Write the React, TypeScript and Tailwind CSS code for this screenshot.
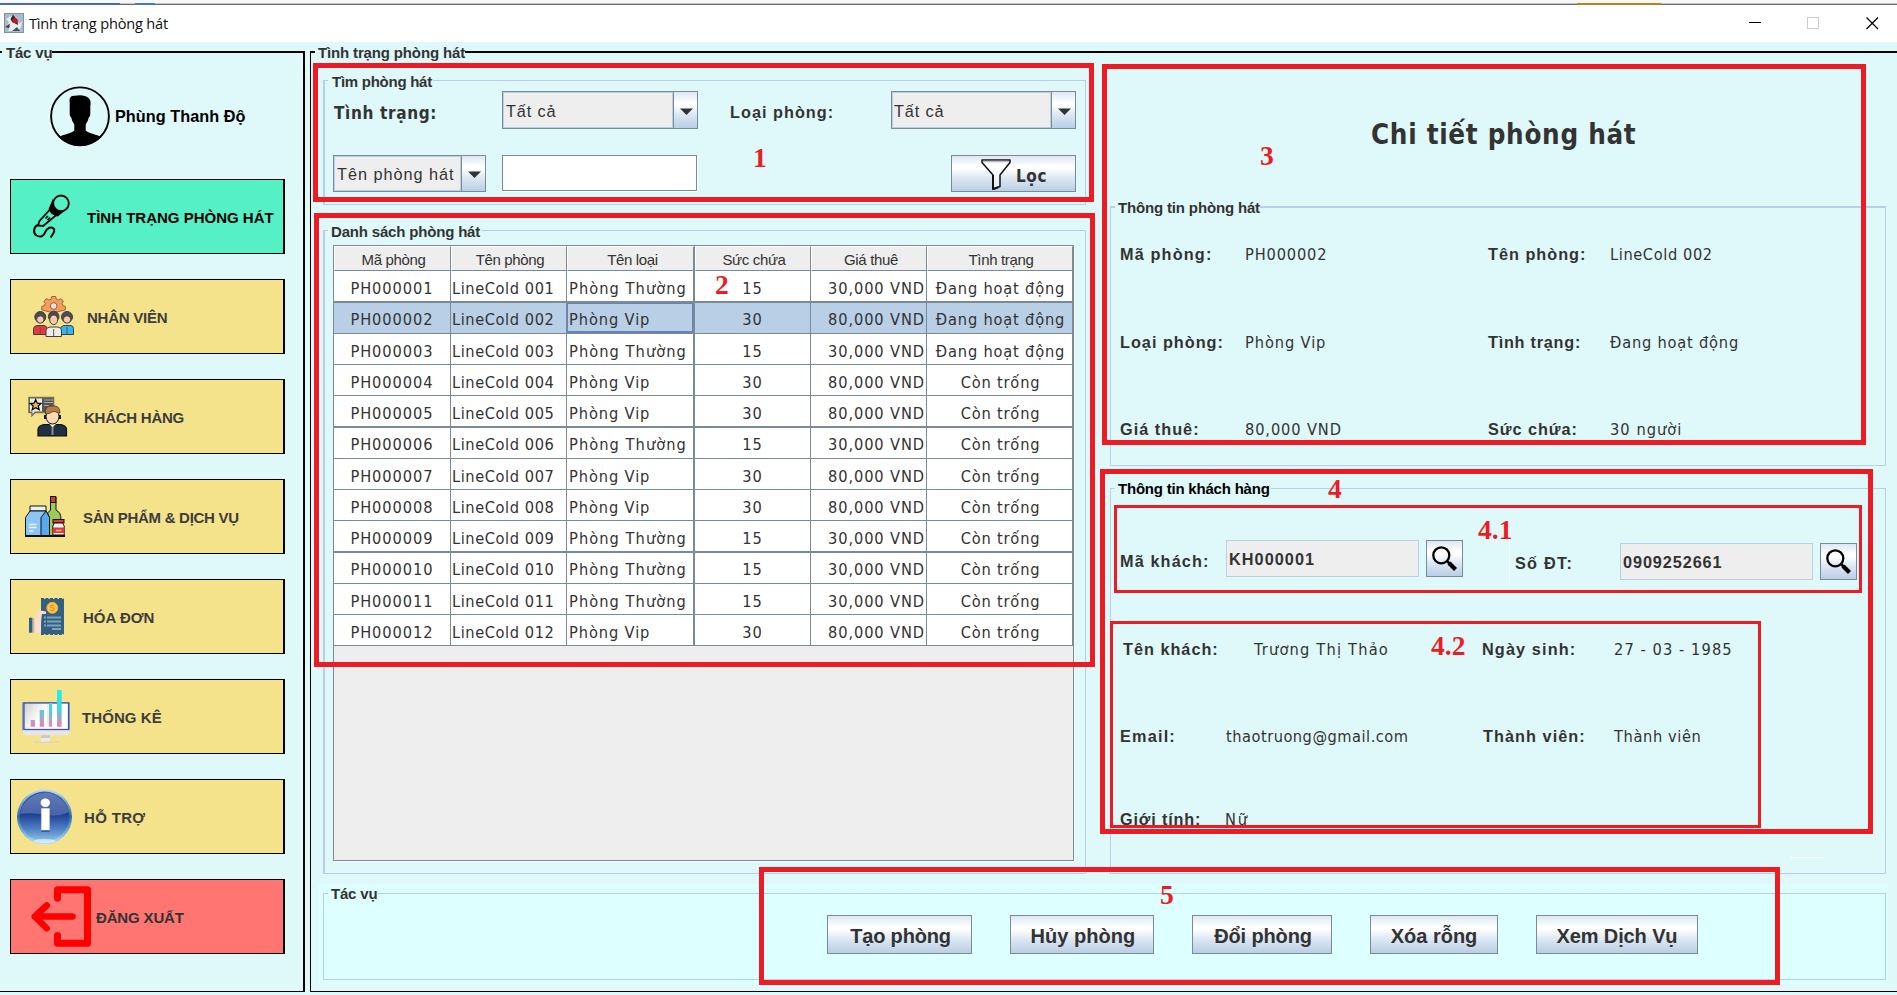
import React from "react";

/* ---------- shared pieces ---------- */

const LABEL = "font-['Liberation_Sans',sans-serif] font-bold text-[16.25px] leading-5 whitespace-nowrap text-[#333]";
const VALUE = "font-['DejaVu_Sans_Condensed','DejaVu_Sans',sans-serif] text-[16.25px] leading-5 whitespace-nowrap text-[#333]";
const DETAIL = VALUE + " pt-px";
const TITLE = "relative h-5 w-fit font-['Liberation_Sans',sans-serif] font-bold text-[15px] leading-5 whitespace-nowrap";
const METAL = "bg-[linear-gradient(to_bottom,#dde8f3_0%,#ffffff_30%,#ffffff_36%,#dde8f3_62%,#b8cfe5_100%)] border border-[#7a8a99]";

function Combo({ text, className, textClass }: { text: string; className: string; textClass: string }) {
  return (
    <div className={"flex border border-[#7a8a99] bg-[#eee] " + className}>
      <div className={"flex flex-1 items-center border border-[#b8cfe5] font-['Liberation_Sans',sans-serif] text-[16.25px] leading-5 whitespace-nowrap text-[#333] " + textClass}>
        {text}
      </div>
      <div className="flex w-[24px] items-center justify-center border-l border-[#7a8a99] bg-[linear-gradient(to_bottom,#dde8f3_0%,#ffffff_30%,#ffffff_36%,#dde8f3_62%,#b8cfe5_100%)]">
        <svg width="13" height="7" className="mt-[2px] ml-px">
          <path d="M0 0.5H13L6.5 7Z" fill="#333" />
        </svg>
      </div>
    </div>
  );
}

function SearchButton({ className }: { className: string }) {
  return (
    <button className={"h-[37px] w-[37px] " + METAL + " " + className}>
      <svg width="35" height="35" viewBox="0 0 35 35" fill="none" stroke="#000">
        <circle cx="14.3" cy="14.3" r="8" strokeWidth="2.3" />
        <path d="M20 20L23 23" strokeWidth="2.5" />
        <path d="M22 22L28.5 28.5" strokeWidth="4.2" />
      </svg>
    </button>
  );
}

/* ---------- sidebar icons ---------- */

const MicIcon = (
  <g fill="none" stroke="#000" strokeWidth="1.8">
    <path d="M40 28.5L28.5 41L27 45.5L32 46L45.5 35Z" />
    <path d="M41.5 22L38.5 29C40 33 42.500 35 46.5 35.500L51.500 31.500C46 31 42.500 28 41.500 22Z" fill="#000" />
    <circle cx="50" cy="23.300" r="7.800" fill="#55f0c5" />
    <path d="M34.500 38.500L37 36M36.500 40L39 37.500" strokeWidth="1.500" />
    <path d="M27.500 44.500C22 47 22 53 25.500 55.500C30 58 33 55.500 34 52.500C36 47.500 40.500 46 43 49C44.500 52 41 55 39.500 57.500" strokeWidth="2" />
  </g>
);

const StaffIcon = (
  <g>
    <g fill="#f99b5b" stroke="#8d6a48" strokeWidth="1">
      <path d="M40.700 16.500h4l.6 2.600 2.200.9 2.300-1.500 2.600 2.700-1.400 2.200.9 2.300 2.400.6v3.600l-12 3-11.500-3v-3.600l2.600-.6.8-2.300-1.300-2.200 2.600-2.700 2.300 1.500 2.300-.9z" />
      <circle cx="42.700" cy="26" r="3.300" fill="#dfe4ea" />
    </g>
    <g stroke="#3f3f46" strokeWidth="1">
      <path d="M22.500 54.500V48.500Q23 46 26 45.500H33Q36 46 36 48.500V54.500Z" fill="#e8383d" />
      <path d="M49.500 54.500V48.500Q50 46 53 45.500H60Q62.500 46 62.500 48.500V54.500Z" fill="#35b5ee" />
      <circle cx="29.300" cy="37" r="5.500" fill="#4a4a52" />
      <circle cx="56" cy="37" r="5.500" fill="#4a4a52" />
      <circle cx="29.300" cy="39.500" r="3.700" fill="#fbc9a8" />
      <circle cx="56" cy="39.500" r="3.700" fill="#fbc9a8" />
      <path d="M35 56.500V50Q35.500 47.500 39 47H46.500Q50.500 47.500 50.500 50V56.500Z" fill="#ececec" />
      <circle cx="42.700" cy="36.500" r="5.300" fill="#4a4a52" />
      <ellipse cx="42.700" cy="39.800" rx="4" ry="4.800" fill="#fbc9a8" />
    </g>
    <path d="M29.300 47v7M56 47v7M42.700 49v7" stroke="#555" strokeWidth="1" />
  </g>
);

const CustomerIcon = (
  <g>
    <path d="M18 17.500H42.500V32.500H24L21 35.500V32.500H18Z" fill="#55564f" stroke="#77714f" strokeWidth="1.500" />
    <path d="M19 18.500H31V31.500H24L21.500 34V31.500H19Z" fill="#ebebeb" />
    <path d="M33 20H42M33 22.500H42M33 25.500H38" stroke="#aaa" strokeWidth="1" />
    <path d="M24.700 19.500L26.300 23.200L30 23.500L27.200 26L28.200 29.800L24.700 27.700L21.200 29.800L22.200 26L19.400 23.500L23.100 23.200Z" fill="#e9bd4b" stroke="#000" strokeWidth="1.200" />
    <path d="M27 56V49Q27.500 45.500 33 44.500H50Q55 45.500 55.500 49V56Z" fill="#213041" stroke="#0d0d0d" strokeWidth="1.200" />
    <path d="M38.500 44L41.500 47.500L45 44Z" fill="#eee" />
    <path d="M41.500 47V55" stroke="#8a8f96" strokeWidth="2" />
    <ellipse cx="41.500" cy="36.500" rx="6.500" ry="7.500" fill="#fbd9b5" stroke="#111" strokeWidth="1" />
    <path d="M34.500 34Q33.500 26 40 26Q49 24.500 49 33L47.500 33Q44 31 42 31.500Q38 34 34.500 34Z" fill="#b27c48" stroke="#4a3a22" strokeWidth=".8" />
    <path d="M34 35v4M49 35v4" fill="none" stroke="#000" strokeWidth="1.800" />
  </g>
);

const ProductIcon = (
  <g stroke="#111" strokeWidth="1">
    <path d="M39.500 17H45V30Q49.800 32.500 49.800 36.500V56.500H36V36Q36.500 32 39.500 30Z" fill="#9ccb5c" />
    <rect x="39.500" y="16.500" width="5.300" height="6" fill="#c04a16" />
    <path d="M19 26H35V31H19Z" fill="#eef1f4" />
    <path d="M19 31H35L38.500 37.500V56.500H14.500V37.500Z" fill="#8cc6f7" />
    <path d="M35 31L38.500 37.500V56.500H30V37.500Z" fill="#5aa9ee" />
    <path d="M18 44.500H25.500M18 47.500H25.500M18 51H22.500" stroke="#e6f3ff" strokeWidth="1.500" />
    <path d="M14 56H54" strokeWidth="1.800" />
    <rect x="42" y="39.500" width="11" height="3.500" fill="#e23b33" />
    <path d="M43.500 43H51.500L53.200 46V55H41.800V46Z" fill="#f3f3f3" />
    <rect x="41.800" y="47.500" width="11.500" height="5.500" fill="#e23b33" stroke="none" />
    <path d="M45 50.500H50.500" stroke="#ffb3ae" strokeWidth="1.500" />
  </g>
);

const InvoiceIcon = (
  <g>
    <rect x="30" y="19" width="23" height="35" fill="#335f80" />
    <path d="M30 18.700H53M30 54.300H53" stroke="#335f80" strokeWidth="1.200" strokeDasharray="3 1.500" />
    <circle cx="41.300" cy="27.800" r="5.500" fill="#f8c944" stroke="#f2a93a" strokeWidth="1" />
    <path d="M43.500 25.500Q39 24.500 39.500 27Q43.500 28 43.300 29.500Q42.500 31.500 39 30.300" fill="none" stroke="#e8912d" strokeWidth="1.200" />
    <path d="M33 37.500H50M33 41.500H50M33 45.500H50M41 49H50" stroke="#7fa3bb" strokeWidth="1.800" />
    <path d="M35.500 36V47" stroke="#335f80" strokeWidth="1" />
    <path d="M23 39L26.500 31.500Q30 30 35 31.500V34H31Q30 37 30 53.500L23 52Z" fill="#fddccb" />
    <path d="M21.300 38H23.300V52.500H21.300Z" fill="#c5b497" />
    <path d="M18 37.700H21.300V52.700H18Z" fill="#335f80" />
  </g>
);

const StatsIcon = (
  <g>
    <defs>
      <linearGradient id="bars" gradientUnits="userSpaceOnUse" x1="0" y1="10" x2="0" y2="47">
        <stop offset="0" stopColor="#17f0f5" />
        <stop offset=".55" stopColor="#4fd0e0" />
        <stop offset="1" stopColor="#f57fb0" />
      </linearGradient>
      <linearGradient id="screen" x1="0" y1="0" x2="1" y2="0.400">
        <stop offset="0" stopColor="#cfcfcf" />
        <stop offset=".5" stopColor="#ffffff" />
      </linearGradient>
    </defs>
    <rect x="11" y="22" width="48" height="28.500" rx="1" fill="#8c9cc4" />
    <path d="M12 49.500H58.500V53Q58.500 55.200 56 55.200H15Q12 55.200 12 53Z" fill="#e6e6e6" />
    <rect x="13" y="23" width="44.500" height="26.500" fill="url(#screen)" stroke="#3c59a8" strokeWidth="1.300" />
    <rect x="30" y="55.200" width="9" height="3" fill="#c9c9c4" />
    <rect x="30" y="58" width="9" height="4" fill="#ecebe6" />
    <path d="M22.500 62.300H48" stroke="#dcd6b8" strokeWidth="1.500" />
    <path d="M29 30H32V46.700H29ZM36 24H40V46.700H36Z" fill="#eee" />
    <path d="M19.700 40H24V46.700H19.700ZM28.700 30H33V46.700H28.700ZM38 23H41V46.700H38ZM46 10H50.700V46.700H46Z" fill="url(#bars)" />
  </g>
);

const HelpIcon = (
  <g>
    <defs>
      <linearGradient id="orb" x1="0" y1="0" x2="0" y2="1">
        <stop offset="0" stopColor="#3a5ba8" />
        <stop offset=".45" stopColor="#1d3f92" />
        <stop offset=".75" stopColor="#4f82c4" />
        <stop offset="1" stopColor="#8fc4e8" />
      </linearGradient>
      <linearGradient id="rim" x1="0" y1="0" x2="0" y2="1">
        <stop offset="0" stopColor="#b9dcf0" />
        <stop offset=".5" stopColor="#2b6cb0" />
        <stop offset="1" stopColor="#b8e2f5" />
      </linearGradient>
    </defs>
    <circle cx="33.500" cy="36.800" r="27.500" fill="url(#rim)" />
    <circle cx="33.500" cy="36.500" r="25" fill="url(#orb)" />
    <path d="M9 34A25 25 0 0 1 58 32Q48 37 36 35Q20 32 9 34Z" fill="#fff" opacity=".2" />
    <ellipse cx="33.500" cy="61" rx="11" ry="2" fill="#d8effa" opacity=".8" />
    <ellipse cx="34.300" cy="22.700" rx="4.700" ry="4.200" fill="#fff" />
    <rect x="30.300" y="28.300" width="8.300" height="22" fill="#fff" />
    <path d="M30.300 51.200H38.600" stroke="#2f5ca8" strokeWidth="1.500" />
  </g>
);

const LogoutIcon = (
  <g fill="none" stroke="#f00" strokeWidth="7" strokeLinejoin="round" strokeLinecap="round">
    <path d="M46.500 18.300V9.800H76.500V63.300H46.500V55.500" />
    <path d="M23.800 36.500H61.500M35.700 25.500L23.800 36.500L35.700 48.300" strokeWidth="6.500" />
  </g>
);

const NAV = [
  { text: "TÌNH TRẠNG PHÒNG HÁT", icon: MicIcon, bg: "bg-[#55f0c5]", label: "ml-[6px] text-black tracking-[0px]" },
  { text: "NHÂN VIÊN", icon: StaffIcon, bg: "bg-[#f5e38c]", label: "ml-[6px] text-[#3d3d3d] tracking-[-0.25px]" },
  { text: "KHÁCH HÀNG", icon: CustomerIcon, bg: "bg-[#f5e38c]", label: "ml-[3px] text-[#3d3d3d] tracking-[-0.25px]" },
  { text: "SẢN PHẨM & DỊCH VỤ", icon: ProductIcon, bg: "bg-[#f5e38c]", label: "ml-[2px] text-[#3d3d3d] tracking-[-0.28px]" },
  { text: "HÓA ĐƠN", icon: InvoiceIcon, bg: "bg-[#f5e38c]", label: "ml-[2px] text-[#3d3d3d] tracking-[0px]" },
  { text: "THỐNG KÊ", icon: StatsIcon, bg: "bg-[#f5e38c]", label: "ml-[1px] text-[#3d3d3d] tracking-[0.08px]" },
  { text: "HỖ TRỢ", icon: HelpIcon, bg: "bg-[#f5e38c]", label: "ml-[3px] text-[#3d3d3d] tracking-[0.33px]" },
  { text: "ĐĂNG XUẤT", icon: LogoutIcon, bg: "bg-[#ff7572]", label: "ml-[15px] text-[#333] tracking-[-0.15px]" },
];

function Sidebar() {
  return (
    <aside className="mt-[9px] h-[941px] w-[305px] shrink-0 border-t-2 border-r-2 border-b border-black">
      <div className={TITLE + " mt-[-10px] ml-[2px] bg-[#dff8fa] pl-[4px] text-[#333] tracking-[-0.19px]"}>Tác vụ</div>
      <div className="mt-[23px] ml-[50px] flex h-[61px] items-center">
        <svg width="60" height="61" viewBox="0 0 60 61">
          <defs>
            <clipPath id="disc"><circle cx="30" cy="30.300" r="29.500" /></clipPath>
          </defs>
          <g clipPath="url(#disc)">
            <path d="M19.700 17Q18.500 9.500 24.500 9.800Q34 8 38.500 12Q41.500 14 40.300 20V27.500Q40.500 30 38.800 31.500Q38 35.500 35.700 38.500V44.500Q37 46.500 48 49.500Q52 51 54 56V62H6V56Q8 51 12 49.500Q23 46.500 24.300 44.500V38.500Q22 35.500 21.200 31.500Q19.500 30 19.700 27.500Z" />
          </g>
          <circle cx="30" cy="30.300" r="28.900" fill="none" stroke="#000" strokeWidth="1.900" />
        </svg>
        <span className={LABEL + " ml-[5px] pb-px !text-black tracking-[0.03px]"}>Phùng Thanh Độ</span>
      </div>
      <nav className="mt-[32px] ml-[10px] flex w-[275px] flex-col gap-[25px]">
        {NAV.map((n) => (
          <button key={n.text} className={"flex h-[75px] items-center border border-r-2 border-black text-left " + n.bg}>
            <svg width="70" height="73" viewBox="0 0 70 73" className="shrink-0 overflow-visible">{n.icon}</svg>
            <span className={"pt-[2px] font-['Liberation_Sans',sans-serif] text-[15px] leading-5 font-bold whitespace-nowrap " + n.label}>{n.text}</span>
          </button>
        ))}
      </nav>
    </aside>
  );
}

/* ---------- room search and list ---------- */

function SearchGroup() {
  return (
    <div className="h-[125px] border border-l-2 border-[#b8cfe5]">
      <div className={TITLE + " mt-[-9px] mb-[-1px] ml-[3px] bg-[#dff8fa] pr-px pl-[4px] text-[#333] tracking-[-0.26px]"}>Tìm phòng hát</div>
      <div className="flex h-[38px] items-start">
        <div className="mt-[12px] ml-[9px] w-[168px] font-['DejaVu_Sans_Condensed','DejaVu_Sans',sans-serif] text-[17px] leading-5 font-bold tracking-[0.65px] whitespace-nowrap text-[#333]">Tình trạng:</div>
        <Combo text="Tất cả" className="h-[38px] w-[196px]" textClass="pl-[2px] pt-[2px] tracking-[0.88px]" />
        <div className={LABEL + " mt-[11px] ml-[32px] w-[161px] tracking-[1.02px]"}>Loại phòng:</div>
        <Combo text="Tất cả" className="h-[38px] w-[185px]" textClass="pl-[1px] pt-[2px] tracking-[0.88px]" />
      </div>
      <div className="mt-[26px] ml-[8px] flex h-[37px]">
        <Combo text="Tên phòng hát" className="w-[153px]" textClass="pl-[2px] pt-px tracking-[0.98px]" />
        <div className="ml-[16px] h-[36px] w-[195px] border border-[#7a8a99] bg-white shadow-[1px_1px_0_#fff]" />
        <button className={"ml-[254px] flex w-[125px] items-start pl-[29px] " + METAL}>
          <svg width="30" height="31" viewBox="0 0 30 31" className="mt-[3px]" fill="none" stroke="#111" strokeWidth="1.500" strokeLinejoin="round">
            <path d="M1 1H29V3.500L19 16V27.500L12 30V16L1 3.500Z" fill="#fff" fillOpacity=".5" />
            <path d="M2 2.500H28" stroke="#b9b9c4" strokeWidth="1.500" />
            <path d="M12 16V30L17 28.500" strokeWidth="2" />
          </svg>
          <span className="mt-[10px] ml-[5px] font-['DejaVu_Sans_Condensed','DejaVu_Sans',sans-serif] text-[17px] leading-5 font-bold tracking-[0.6px] text-[#333]">Lọc</span>
        </button>
      </div>
    </div>
  );
}

const COLS = "grid grid-cols-[117px_116px_128px_116px_116px_146px]";
const HEADS = ["Mã phòng", "Tên phòng", "Tên loại", "Sức chứa", "Giá thuê", "Tình trạng"];
const ROOMS: [string, boolean, boolean][] = [
  ["001", false, true],
  ["002", true, true],
  ["003", false, true],
  ["004", true, false],
  ["005", true, false],
  ["006", false, false],
  ["007", true, false],
  ["008", true, false],
  ["009", false, false],
  ["010", false, false],
  ["011", false, false],
  ["012", true, false],
];

function RoomTable() {
  return (
    <div className="mt-[3px] ml-[8px] h-[616px] w-[741px] border border-[#7a8a99] bg-[#eee] shadow-[1px_1px_0_#fff]">
      <div className={COLS + " h-[25px]"}>
        {HEADS.map((h, i) => (
          <div
            key={h}
            className={
              "flex justify-center border-t border-b border-l border-t-white border-b-[#7a8a99] border-l-white border-r-[#7a8a99] bg-[#eee] pt-[3px] font-['Liberation_Sans',sans-serif] text-[15px] leading-5 tracking-[-0.34px] whitespace-nowrap text-[#333] " +
              (i === 2 ? "border-r-2 pl-[4px]" : i === 4 ? "border-r pl-[4px]" : "border-r pl-[2px]")
            }
          >
            {h}
          </div>
        ))}
      </div>
      {ROOMS.map(([no, vip, busy], i) => {
        const thick = i === 0 || i === 4 || i === 8;
        const selected = i === 1;
        const afterThick = i === 1 || i === 5 || i === 9;
        const cell = (thick ? "border-b-2 " : "border-b ") + "border-[#7a8a99] " + (afterThick ? "pt-[7px] " : "pt-[8px] ") + VALUE + " ";
        return (
          <div key={no} className={COLS + " " + (thick ? "h-[32px] " : "h-[31px] ") + (selected ? "bg-[#b8cfe5]" : "bg-white")}>
            <div className={cell + "border-r text-center tracking-[0.95px]"}>PH000{no}</div>
            <div className={cell + "border-r pl-px tracking-[0.58px]"}>LineCold {no}</div>
            <div className={cell + "border-r-2 pl-[2px] " + (vip ? "tracking-[0.9px]" : "tracking-[1.06px]") + (selected ? " shadow-[inset_1px_1px_0_#6382bf,inset_-1px_-2px_0_#6382bf]" : "")}>
              {vip ? "Phòng Vip" : "Phòng Thường"}
            </div>
            <div className={cell + "border-r text-center tracking-[1px]"}>{vip ? 30 : 15}</div>
            <div className={cell + "border-r pr-px text-right tracking-[0.9px]"}>{vip ? "80,000 VND" : "30,000 VND"}</div>
            <div className={cell + "border-r pl-[2px] text-center tracking-[0.82px]"}>{busy ? "Đang hoạt động" : "Còn trống"}</div>
          </div>
        );
      })}
    </div>
  );
}

/* ---------- details ---------- */

function RoomInfo() {
  return (
    <div className="h-[260px] border border-t-2 border-[#b8cfe5]">
      <div className={TITLE + " mt-[-10px] ml-[4px] bg-[#dff8fa] pl-[3px] text-[#333] tracking-[-0.16px]"}>Thông tin phòng hát</div>
      <div className="mt-[26px] grid grid-cols-[125px_243px_122px_auto] pl-[9px]">
        <div className={LABEL + " h-[88px] tracking-[1.15px]"}>Mã phòng:</div>
        <div className={DETAIL + " tracking-[0.85px]"}>PH000002</div>
        <div className={LABEL + " tracking-[1px]"}>Tên phòng:</div>
        <div className={DETAIL + " tracking-[0.6px]"}>LineCold 002</div>
        <div className={LABEL + " h-[87px] tracking-[1px]"}>Loại phòng:</div>
        <div className={DETAIL + " tracking-[0.9px]"}>Phòng Vip</div>
        <div className={LABEL + " tracking-[0.75px]"}>Tình trạng:</div>
        <div className={DETAIL + " tracking-[0.8px]"}>Đang hoạt động</div>
        <div className={LABEL + " tracking-[1.02px]"}>Giá thuê:</div>
        <div className={DETAIL + " tracking-[0.88px]"}>80,000 VND</div>
        <div className={LABEL + " tracking-[0.95px]"}>Sức chứa:</div>
        <div className={DETAIL + " tracking-[1.05px]"}>30 người</div>
      </div>
    </div>
  );
}

function CustomerInfo() {
  const field = "h-[37px] w-[193px] border border-[#b8cfe5] bg-[#eee] pt-[8px] ";
  return (
    <div className="h-[386px] border border-[#b8cfe5]">
      <div className={TITLE + " mt-[-10px] ml-[4px] bg-[#dff8fa] pr-px pl-[3px] text-black tracking-[-0.21px]"}>Thông tin khách hàng</div>
      <div className="mt-[41px] flex h-[40px] items-start pl-[9px]">
        <div className={LABEL + " mt-[11px] w-[106px] tracking-[1.12px]"}>Mã khách:</div>
        <div className={LABEL + " " + field + "pl-[2px] tracking-[1.05px]"}>KH000001</div>
        <SearchButton className="ml-[7px]" />
        <div className="-mt-[5px] ml-[46px] h-[49px] w-px bg-[#f7fefe]" />
        <div className={LABEL + " mt-[13px] ml-[5px] w-[105px] tracking-[1.25px]"}>Số ĐT:</div>
        <div className={LABEL + " mt-[3px] " + field + "pl-[2px] tracking-[0.91px]"}>0909252661</div>
        <SearchButton className="mt-[3px] ml-[7px]" />
      </div>
      <div className="mt-[59px] flex pl-[12px]">
        <div className={LABEL + " w-[131px] tracking-[1px]"}>Tên khách:</div>
        <div className={DETAIL + " w-[228px] tracking-[1.2px]"}>Trương Thị Thảo</div>
        <div className={LABEL + " w-[132px] tracking-[1.12px]"}>Ngày sinh:</div>
        <div className={DETAIL + " tracking-[1.08px]"}>27 - 03 - 1985</div>
      </div>
      <div className="mt-[66px] flex pl-[9px]">
        <div className={LABEL + " w-[106px] tracking-[1.2px]"}>Email:</div>
        <div className={DETAIL + " w-[257px] tracking-[0.5px]"}>thaotruong@gmail.com</div>
        <div className={LABEL + " w-[131px] tracking-[1.05px]"}>Thành viên:</div>
        <div className={DETAIL + " tracking-[0.62px]"}>Thành viên</div>
      </div>
      <div className="mt-[62px] flex pl-[9px]">
        <div className={LABEL + " w-[105px] tracking-[0.83px]"}>Giới tính:</div>
        <div className={DETAIL + " tracking-[1.8px]"}>Nữ</div>
      </div>
      <div className="mt-[27px] ml-[679px] h-px w-[35px] bg-[#f7fefe]" />
    </div>
  );
}

const ACTIONS = [
  { text: "Tạo phòng", className: "w-[145px] pl-[2px] tracking-[-0.19px]" },
  { text: "Hủy phòng", className: "w-[144px] pl-[2px] tracking-[0.04px]" },
  { text: "Đổi phòng", className: "w-[140px] pl-[2px] tracking-[-0.14px]" },
  { text: "Xóa rỗng", className: "w-[128px]" },
  { text: "Xem Dịch Vụ", className: "w-[162px] tracking-[-0.12px]" },
];

/* ---------- numbered annotations ---------- */

const MARKS = [
  { n: "1", box: "left-[313px] top-[63px] h-[139px] w-[781px] border-[5px]", tag: "left-[753px] top-[144px]" },
  { n: "2", box: "left-[314px] top-[213px] h-[454px] w-[781px] border-[5px]", tag: "left-[715px] top-[271px]" },
  { n: "3", box: "left-[1102px] top-[64px] h-[381px] w-[764px] border-[5px]", tag: "left-[1260px] top-[142px]" },
  { n: "4", box: "left-[1100px] top-[469px] h-[365px] w-[773px] border-[5px]", tag: "left-[1328px] top-[475px]" },
  { n: "4.1", box: "left-[1114px] top-[505px] h-[88px] w-[748px] border-[3px]", tag: "left-[1478px] top-[516px]" },
  { n: "4.2", box: "left-[1110px] top-[621px] h-[207px] w-[651px] border-[3px]", tag: "left-[1431px] top-[632px]" },
  { n: "5", box: "left-[759px] top-[867px] h-[118px] w-[1021px] border-[5px]", tag: "left-[1160px] top-[881px]" },
];

export default function App() {
  return (
    <div className="relative flex h-[995px] w-[1897px] flex-col overflow-hidden bg-[#dff8fa]">
      <div className="h-[3px] bg-[#f7f7f7]" />
      <div className="flex h-[2px] border-b border-[#6b6b6b] bg-[#c4c4c4]">
        <div className="-mb-px h-[2px] w-[120px] bg-[#4a69b0]" />
        <div className="-mb-px ml-[15px] h-[2px] w-[20px] bg-[#3f7fb4]" />
        <div className="-mb-px ml-[1422px] h-[2px] w-[84px] bg-[#b8821c]" />
      </div>
      <header className="flex h-[37px] items-start bg-white">
        <svg width="20" height="20" viewBox="0 0 20 20" className="mt-[8px] ml-[4px]">
          <rect x=".5" y=".5" width="19" height="19" fill="#a9bac9" stroke="#7d93a8" />
          <path d="M2 6Q6 3 10 2L13 5L15 11L18 8L17 14L14 18H4L7 12L2 14L5 9Z" fill="#e9edf0" />
          <path d="M9 1.500L13.500 7L14 12L8 9L6.500 6Z" fill="#2c2f33" />
          <path d="M1 14L6 10.500L5 15Z" fill="#3a3f45" />
          <circle cx="11" cy="7.500" r="2.600" fill="#c9151b" />
          <path d="M8 18L13 14L16 18Z" fill="#4a5158" />
        </svg>
        <span className="mt-[8px] ml-[5px] font-['Open_Sans',sans-serif] text-[14.600px] leading-5 tracking-[-0.2px] whitespace-nowrap text-[#111]">Tình trạng phòng hát</span>
        <svg width="130" height="14" viewBox="0 0 130 14" className="mt-[11px] mr-[18px] ml-auto" fill="none" shapeRendering="crispEdges">
          <path d="M0 6.500H12" stroke="#000" />
          <rect x="58.500" y="1.500" width="11" height="11" stroke="#ccc" />
          <path d="M117.500 1.500L129 13M129 1.500L117.500 13" stroke="#000" strokeWidth="1.200" shapeRendering="auto" />
        </svg>
      </header>

      <div className="flex flex-1">
        <Sidebar />
        <main className="mt-[9px] ml-[5px] h-[941px] flex-1 border-t-2 border-b border-l border-black">
          <div className="flex h-[831px] pl-[12px]">
            <div className="w-[763px]">
              <div className={TITLE + " mt-[-10px] ml-[-8px] bg-[#dff8fa] pl-[3px] text-[#333] tracking-[-0.15px]"}>Tình trạng phòng hát</div>
              <div className="h-[17px]" />
              <SearchGroup />
              <div className="mt-[25px] h-[644px] border border-l-2 border-[#b8cfe5]">
                <div className={TITLE + " mt-[-9px] ml-[3px] bg-[#dff8fa] pr-[2px] pl-[3px] text-[#333] tracking-[-0.18px]"}>Danh sách phòng hát</div>
                <RoomTable />
              </div>
            </div>
            <div className="ml-[24px] w-[776px]">
              <h1 className="h-[153px] pt-[66px] pl-[261px] font-['DejaVu_Sans_Condensed','DejaVu_Sans',sans-serif] text-[27.500px] leading-[30px] font-bold tracking-[0.7px] whitespace-nowrap text-[#333]">
                Chi tiết phòng hát
              </h1>
              <RoomInfo />
              <div className="h-[22px]" />
              <CustomerInfo />
            </div>
          </div>
          <div className="ml-[8px] h-[100px] w-[1569px] bg-[#deffff] pt-[9px] pl-[4px]">
            <div className="h-[87px] w-[1563px] border border-[#b8cfe5]">
              <div className={TITLE + " mt-[-10px] ml-[4px] bg-[#deffff] pr-px pl-[3px] text-[#333] tracking-[-0.19px]"}>Tác vụ</div>
              <div className="mt-[11px] ml-[503px] flex gap-[38px]">
                {ACTIONS.map((a) => (
                  <button key={a.text} className={"h-[39px] pt-[3px] font-['Liberation_Sans',sans-serif] text-[20px] leading-6 font-bold whitespace-nowrap text-[#333] " + METAL + " " + a.className}>
                    {a.text}
                  </button>
                ))}
              </div>
            </div>
          </div>
        </main>
      </div>

      {MARKS.map((m) => (
        <React.Fragment key={m.n}>
          <div className={"pointer-events-none absolute border-[#ed1c24] " + m.box} />
          <div className={"pointer-events-none absolute font-['Liberation_Serif',serif] text-[27.500px] leading-[28px] font-bold text-[#ed1c24] " + m.tag}>{m.n}</div>
        </React.Fragment>
      ))}
    </div>
  );
}
